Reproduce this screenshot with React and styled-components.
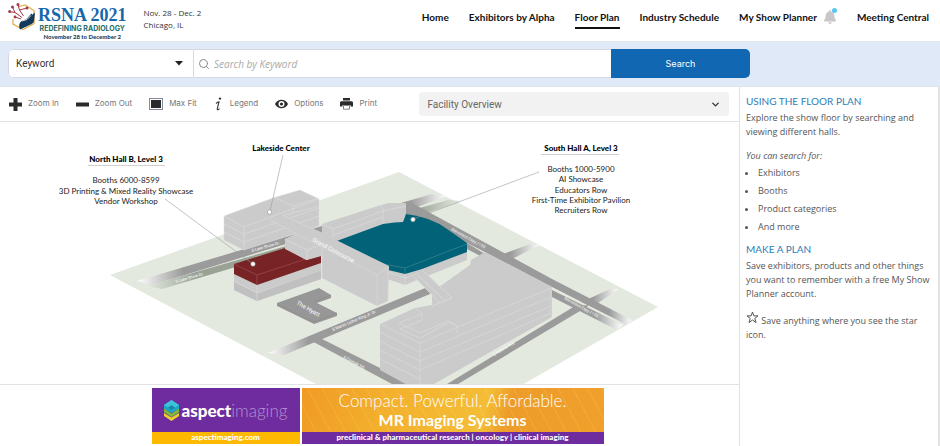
import React, { useState } from 'react'
import styled, { createGlobalStyle } from 'styled-components';
import { FaBell } from 'react-icons/fa';
import { FiChevronDown, FiSearch } from 'react-icons/fi';

const navItems = ['Home', 'Exhibitors by Alpha', 'Floor Plan', 'Industry Schedule', 'My Show Planner', 'Meeting Central'];
const searchTargets = ['Exhibitors', 'Booths', 'Product categories', 'And more'];

const PlusIcon = () => (
  <svg width="13" height="13" viewBox="0 0 13 13"><path d="M4.5 0h4v4.5H13v4H8.5V13h-4V8.500H0v-4h4.500z" fill="#2b2b2b" /></svg>
);
const MinusIcon = () => (
  <svg width="13" height="13" viewBox="0 0 13 13"><path d="M0 4.500h13v4H0z" fill="#2b2b2b" /></svg>
);
const FitIcon = () => (
  <svg width="14" height="12" viewBox="0 0 14 12">
    <rect x=".5" y=".5" width="13" height="11" fill="#fff" stroke="#8088a0" />
    <rect x="2" y="2" width="10" height="8" fill="#2b2b2b" />
  </svg>
);
const LegendIcon = () => (
  <svg width="10" height="16" viewBox="0 0 10 16">
    <circle cx="6" cy="2.600" r="1.200" fill="#333" />
    <path d="M2 7.500c1-1 2-1.700 3-1.700L3.300 12.500c-.2 1 .1 1.500.8 1.200.6-.2 1-.7 1.400-1.200" fill="none" stroke="#333" strokeWidth="1.100" />
  </svg>
);
const EyeIcon = () => (
  <svg width="13" height="10" viewBox="0 0 13 10">
    <path d="M0 5C1.500 2 4 .7 6.500.7S11.500 2 13 5c-1.500 3-4 4.300-6.500 4.300S1.500 8 0 5z" fill="#2b2b2b" />
    <circle cx="6.500" cy="5" r="3" fill="#fff" />
    <circle cx="6.500" cy="5" r="1.600" fill="#2b2b2b" />
  </svg>
);
const PrintIcon = () => (
  <svg width="13" height="12" viewBox="0 0 13 12">
    <path d="M3 0h7v2.500H3zM1 3.300h11l1 1v4.200h-2.500V7h-8v1.500H0V4.300z" fill="#2b2b2b" />
    <path d="M3.500 7.500h6v3.700h-6z" fill="#fff" stroke="#666" strokeWidth=".8" />
  </svg>
);

const tools = [
  { label: 'Zoom In', Icon: PlusIcon },
  { label: 'Zoom Out', Icon: MinusIcon },
  { label: 'Max Fit', Icon: FitIcon },
  { label: 'Legend', Icon: LegendIcon },
  { label: 'Options', Icon: EyeIcon },
  { label: 'Print', Icon: PrintIcon },
];

const LogoMark = () => (
  <svg width="29" height="29" viewBox="0 0 29 29" fill="none">
    <path d="M5 17V22l10 5.500L26 21.500V8.500L17 3 10 5" stroke="#e3b04b" strokeWidth="1.300" />
    <path d="M12 27.500c-1-2-1.500-5 .5-7.500 2-2 5-2 6.500-3.500l4-4.500c1-.8 1.500 0 1 1l3-2.500-1 9c-1 2.500-4 3-6.500 4.500z" fill="#12395b" />
    <path d="M14 19l5-1.500 4-4" stroke="#fff" strokeWidth=".8" />
    <path d="M1 9.500l6 1 7 5M7 10.500L4.500 5M10 3l1.500 5 4 6M11.500 8L19 6M7 15l6 2" stroke="#a23a4a" strokeWidth="1" />
    <g fill="#a23a4a">
      <circle cx="1.700" cy="9.500" r="1.500" /><circle cx="4.500" cy="5" r="1.500" /><circle cx="10" cy="2.500" r="1.500" />
      <circle cx="19" cy="6" r="1.500" /><circle cx="7" cy="15" r="1.400" />
    </g>
  </svg>
);

const AspectMark = () => (
  <svg width="15" height="21" viewBox="0 0 15 21">
    <path d="M7.500 0L15 5v4L7.500 13 0 9V5z" fill="#1ba6c4" />
    <path d="M7.500 5L11 7.500 7.500 10 4 7.500z" fill="#1786a8" />
    <path d="M7.500 0L15 5l-4 2.500L7.500 5 4 7.500 0 5z" fill="#3cc3d8" />
    <path d="M0 8.500l7.500 5 7.500-5v3.800l-7.500 4.700L0 12.300z" fill="#7fb83e" />
    <path d="M0 13l7.500 4.500L15 13v3l-7.500 5L0 16z" fill="#e8d22a" />
  </svg>
);

const CampusMap = () => (
  <SMap viewBox="0 122 739 262" preserveAspectRatio="xMidYMin slice" role="img" aria-label="Facility overview map">
    <defs>
      <linearGradient id="fadeWest"><stop offset="0" stopColor="#fff" /><stop offset=".25" stopColor="#9b9b9b" /></linearGradient>
      <linearGradient id="fadeGreen"><stop offset="0" stopColor="#e3e9df" /><stop offset=".35" stopColor="#9aa296" /></linearGradient>
      <linearGradient id="fadeEast"><stop offset=".2" stopColor="#9b9b9b" /><stop offset="1" stopColor="#fff" /></linearGradient>
      <linearGradient id="fadeEastGreen"><stop offset="0" stopColor="#9aa296" /><stop offset="1" stopColor="#e3e9df" /></linearGradient>
      <linearGradient id="fadeExpress"><stop offset=".9" stopColor="#9b9b9b" /><stop offset="1" stopColor="#fff" /></linearGradient>
      <linearGradient id="fadeLane"><stop offset=".6" stopColor="#9b9b9b" /><stop offset="1" stopColor="#fff" /></linearGradient>
    </defs>

    <path d="M110 275L399 172L658 307L480 409L363 409z" fill="#e3e9df" />

    {/* roads */}
    <path d="M137 281L322 226v7L152 285z" fill="url(#fadeWest)" />
    <path d="M147 286L286 246v6L162 289z" fill="url(#fadeGreen)" />
    <path d="M268 353L430 286v8L284 355z" fill="url(#fadeWest)" />
    <path d="M308 339L318 337L412 384L405 391z" fill="#9b9b9b" />
    <path d="M434 392L575 306L590 305L458 384z" fill="#9b9b9b" />
    <path d="M401 203L432 194L447 196L412 209z" fill="url(#fadeEast)" />
    <path d="M416 209L448 200L461 201L424 214z" fill="url(#fadeEastGreen)" />
    <path d="M503 254L530 244L540 245L512 259z" fill="url(#fadeEast)" />
    <path d="M586 300L610 289L619 289L592 307z" fill="url(#fadeEast)" />
    <path d="M404 205L412 203L552 279L632 320L626 325L552 287L404 210z" fill="url(#fadeExpress)" />
    <path d="M404 209L467 243L490 257L482 257L404 215z" fill="#9b9b9b" />
    <path d="M552 290L623 325L617 330L552 297z" fill="url(#fadeLane)" />
    <path d="M552 288L580 302M588 306L626 325" stroke="#e3e9df" strokeWidth="1.200" />

    {/* Lakeside Center */}
    <path d="M224 216L273 198L300 190L319 199V226L244 250L224 240z" fill="#cbcbcb" stroke="#dcdcdc" strokeWidth=".5" />
    <path d="M224 216L244 227L319 199M244 227V250M224 224L244 234L319 208M224 232L244 242L319 216M274 197L293 206V213L281 216M293 206L319 198M293 213L319 206" fill="none" stroke="#dfdfdf" strokeWidth=".6" />

    {/* North Hall */}
    <path d="M234 273L257 284L321 262V279L257 301L234 290z" fill="#cbcbcb" />
    <path d="M234 282L257 293V301L234 290zM257 293L321 269V279L257 301z" fill="#c0c0c0" />
    <path d="M234 264L285 248L306 260L321 255V263L257 285L234 274z" fill="#782426" />
    <path d="M234 264L257 275L321 254M257 275V285" fill="none" stroke="#a35558" strokeWidth=".6" />
    <path d="M257 285V301M234 281L257 293L321 270" fill="none" stroke="#dedede" strokeWidth=".6" />
    <path d="M285 239L297 233L325 240V255L307 260L285 249z" fill="#cbcbcb" />
    <path d="M285 239L307 250V260M307 250L321 245" fill="none" stroke="#e1e1e1" strokeWidth=".6" />

    {/* South Hall */}
    <path d="M322 224L381 205L389 203H406V214L403 222L383 225L334 243L322 239z" fill="#cbcbcb" />
    <path d="M322 224L333 229L383 211L406 206M333 229V242M383 211V225M333 235L383 217M381 205L384 211" fill="none" stroke="#dedede" strokeWidth=".6" />
    <path d="M384 266L405 272L467 248V260L405 285L384 278z" fill="#cbcbcb" />
    <path d="M388 272L405 278L424 271M405 274V285" fill="none" stroke="#dedede" strokeWidth=".6" />
    <path d="M334 242L383 224Q395 222 403 222L406 214Q431 217 447 229L467 243V252L422 269L405 274L388 270L373 262z" fill="#026277" />
    <path d="M373 262L405 268L467 244M405 268V274" fill="none" stroke="#3e8796" strokeWidth=".7" />

    {/* Grand Concourse */}
    <path d="M270 220L282 215L322 233L389 266L388 301L377 306L322 278V246z" fill="#cbcbcb" />
    <path d="M270 220L322 247L377 275L389 267M377 275V306M388 267V301M322 247V278M282 215L322 233" fill="none" stroke="#dadada" strokeWidth=".6" />

    {/* The Hyatt */}
    <path d="M277 303L319 288L331 295V298L317 303L337 313V316L314 324L277 306z" fill="#979797" />
    <path d="M277 304L314 322L337 313M331 295L314 302" fill="none" stroke="#898989" strokeWidth=".6" />

    {/* South building */}
    <path d="M380 324L415 308L432 305V292L470 265L471 260L485 252L552 287V317L420 392L380 370z" fill="#cbcbcb" />
    <path d="M422 313L415 308M422 313V320L400 329L420 338L450 322L457 326V333M399 323L420 333L448 321L457 326M399 323L421 314M380 324L420 343L551 288M380 332L420 352L551 297M380 341L420 361L551 306M380 350L420 370L551 313M380 359L420 379M420 343V384M551 288V317" fill="none" stroke="#dedede" strokeWidth=".6" />
    <path d="M414 277L422 269L452 298L440 303z" fill="#cbcbcb" />
    <path d="M414 277L440 303M418 275L445 301M422 270L452 298L432 306" fill="none" stroke="#e1e1e1" strokeWidth=".6" />

    {/* road names follow the direction of the road */}
    <g fill="#fff" fontFamily="Roboto, sans-serif" fontSize="4">
      <text transform="translate(252 252) rotate(-16)">S Lake Shore Dr.</text>
      <text transform="translate(176 283) rotate(-16)">S Lake Shore Dr.</text>
      <text transform="translate(333 331) rotate(-23)">S Martin Luther King Jr. Dr.</text>
      <text transform="translate(343 358) rotate(28)">S Cermak Rd.</text>
      <text transform="translate(494 356) rotate(-30)">S Indiana Ave</text>
      <text transform="translate(451 230) rotate(29)">Stevenson Expy / I-55</text>
      <text transform="translate(564 299) rotate(29)">Stevenson Expy / I-55</text>
      <text transform="translate(312 241) rotate(28)" fontSize="6">Grand Concourse</text>
      <text transform="translate(296 304) rotate(30)" fontSize="6">The Hyatt</text>
    </g>

    <g stroke="#9c9c9c" strokeWidth=".6">
      <path d="M283 155L270 211M165 199L253 264M539 172L413 219" />
      <path d="M88 165.500H165M541 154.500H619" stroke="#b0b0b0" />
    </g>
    <g fill="#fff" stroke="#999" strokeWidth=".7">
      <circle cx="269.500" cy="212" r="2.200" /><circle cx="253" cy="264" r="2.200" /><circle cx="413" cy="219.500" r="2.200" />
    </g>

    <g textAnchor="middle" fill="#222" fontFamily="Lato, sans-serif" fontSize="8">
      <g fontWeight="900" fill="#000">
        <text x="126" y="162">North Hall B, Level 3</text>
        <text x="281" y="151">Lakeside Center</text>
        <text x="581" y="151">South Hall A, Level 3</text>
      </g>
      <text x="126" y="183">Booths 6000-8599</text>
      <text x="126" y="194">3D Printing &amp; Mixed Reality Showcase</text>
      <text x="126" y="204">Vendor Workshop</text>
      <text x="581" y="172">Booths 1000-5900</text>
      <text x="581" y="182">AI Showcase</text>
      <text x="581" y="193">Educators Row</text>
      <text x="581" y="203">First-Time Exhibitor Pavilion</text>
      <text x="581" y="213">Recruiters Row</text>
    </g>
  </SMap>
);

export default function App() {
  const [keyword, setKeyword] = useState('');

  return (
    <>
      <GlobalStyle />
      <SHeader>
        <SLogo href="#">
          <LogoMark />
          <SLogoText>
            <SLogoName>RSNA 2021</SLogoName>
            <SLogoTheme>REDEFINING RADIOLOGY</SLogoTheme>
            <SLogoDate>November 28 to December 2</SLogoDate>
          </SLogoText>
        </SLogo>
        <SEventInfo>Nov. 28 - Dec. 2<br />Chicago, IL</SEventInfo>
        <SNav>
          {navItems.map((item) => (
            <SNavItem key={item}>
              <SNavLink href="#" $active={item === 'Floor Plan'}>{item}</SNavLink>
              {item === 'My Show Planner' && <SBell><FaBell size={14} /></SBell>}
            </SNavItem>
          ))}
        </SNav>
      </SHeader>

      <SSearchBand>
        <SSearchForm onSubmit={(e) => e.preventDefault()}>
          <SSelectArea>
            <STypeSelect aria-label="Search type"><option>Keyword</option></STypeSelect>
            <svg width="8" height="5" viewBox="0 0 8 5"><path d="M0 0h8L4 4.500z" fill="#222" /></svg>
          </SSelectArea>
          <SInputArea>
            <FiSearch size={12} />
            <input type="text" aria-label="Search by Keyword" placeholder="Search by Keyword" value={keyword} onChange={(e) => setKeyword(e.target.value)} />
          </SInputArea>
          <SSearchButton type="submit">Search</SSearchButton>
        </SSearchForm>
      </SSearchBand>

      <SBody>
        <SMain>
          <SToolbar>
            <STools>
              {tools.map(({ label, Icon }) => (
                <STool key={label} type="button"><Icon /><span>{label}</span></STool>
              ))}
            </STools>
            <SFacility>
              <SFacilitySelect aria-label="Facility"><option>Facility Overview</option></SFacilitySelect>
              <FiChevronDown size={11} strokeWidth={3} />
            </SFacility>
          </SToolbar>
          <CampusMap />
          <SAdArea>
            <SAd href="#">
              <SAdPanel>
                <SAdBrand><AspectMark /><span><b>aspect</b>imaging</span></SAdBrand>
                <SAdStrip $color="#fdb902">aspectimaging.com</SAdStrip>
              </SAdPanel>
              <SAdPanel>
                <SAdMessage>
                  <SAdLead>Compact. Powerful. Affordable.</SAdLead>
                  <SAdTitle>MR Imaging Systems</SAdTitle>
                </SAdMessage>
                <SAdStrip $color="#6f2c9e">preclinical &amp; pharmaceutical research | oncology | clinical imaging</SAdStrip>
              </SAdPanel>
            </SAd>
          </SAdArea>
        </SMain>
        <SSide>
          <SSideTitle>USING THE FLOOR PLAN</SSideTitle>
          <SText>Explore the show floor by searching and viewing different halls.</SText>
          <SNote>You can search for:</SNote>
          <SList>
            {searchTargets.map((target) => <li key={target}>{target}</li>)}
          </SList>
          <SSideTitle>MAKE A PLAN</SSideTitle>
          <SText>Save exhibitors, products and other things you want to remember with a free My Show Planner account.</SText>
          <SText>
            <svg width="13" height="13" viewBox="0 0 13 13"><path d="M6.500 1l1.400 3.900H12L8.800 7.400 10 11.500 6.500 9 3 11.500l1.200-4.100L1 4.900h4.100z" fill="none" stroke="#555" /></svg>
            {' '}Save anything where you see the star icon.
          </SText>
        </SSide>
      </SBody>
    </>
  )
}

const GlobalStyle = createGlobalStyle`
  * {
    box-sizing: border-box;
  }
  body {
    margin: 0;
    background: #fff;
    color: #555;
    font-family: Lato, sans-serif;
    overflow: hidden;
  }
  button, input, select {
    margin: 0;
    border: 0;
    padding: 0;
    background: none;
    font-family: inherit;
    outline: none;
  }
  a {
    color: inherit;
    text-decoration: none;
  }
`

const SHeader = styled.header`
  display: flex;
  align-items: flex-start;
  height: 42px;
  padding: 0 11px 0 8px;
  border-bottom: 1px solid #e3e6ec;
`
const SLogo = styled.a`
  display: flex;
  gap: 1px;
  padding-top: 2px;
`
const SLogoText = styled.span`
  display: flex;
  flex-direction: column;
  align-items: center;
  padding-top: 3px;
  font-weight: 700;
  white-space: nowrap;
`
const SLogoName = styled.span`
  color: #1668ad;
  font: 700 18px/20px "Liberation Serif", serif;
`
const SLogoTheme = styled.span`
  color: #1d6d6b;
  font-family: Inter, sans-serif;
  font-size: 7px;
  line-height: 8px;
`
const SLogoDate = styled.span`
  color: #24425f;
  font-size: 6px;
  font-weight: 900;
  line-height: 7px;
`
const SEventInfo = styled.p`
  margin: 0 0 0 17px;
  padding-top: 7px;
  color: #333;
  font-family: "Open Sans", sans-serif;
  font-size: 8px;
  line-height: 12px;
  white-space: nowrap;
`
const SNav = styled.nav`
  display: flex;
  gap: 20px;
  margin-left: auto;
  padding-top: 8px;
`
const SNavItem = styled.div`
  display: flex;
  gap: 6px;
`
const SNavLink = styled.a`
  height: 21px;
  border-bottom: 2px solid ${({ $active }) => ($active ? '#111' : 'transparent')};
  color: #111;
  font-size: 10px;
  font-weight: 700;
  line-height: 18px;
  white-space: nowrap;
`
const SBell = styled.span`
  position: relative;
  height: 14px;
  color: #c8c8c8;

  &::after {
    content: '';
    position: absolute;
    top: 0;
    right: 0;
    width: 5px;
    height: 5px;
    border-radius: 50%;
    background: #5bc4ee;
  }
`

const SSearchBand = styled.div`
  padding: 7px 190px 8px 8px;
  border-bottom: 1px solid #dfe3ea;
  background: #e0e9f7;
`
const SSearchForm = styled.form`
  display: grid;
  grid-template-columns: 186px 1fr 139px;
  height: 29px;
  overflow: hidden;
  border-radius: 5px;
  background: #fff;
`
const SSelectArea = styled.div`
  display: flex;
  align-items: center;
  padding: 0 10px 0 7px;
  border: 1px solid #d5dae2;
  border-radius: 5px 0 0 5px;
`
const STypeSelect = styled.select`
  flex: 1;
  appearance: none;
  color: #333;
  font-family: Roboto, sans-serif;
  font-size: 10px;
`
const SInputArea = styled.div`
  display: flex;
  align-items: center;
  gap: 4px;
  padding-left: 4px;
  border: solid #d5dae2;
  border-width: 1px 0;
  color: #888;

  & > input {
    flex: 1;
    min-width: 0;
    font-family: "Open Sans", sans-serif;
    font-size: 10px;
    font-style: italic;
  }
  & > input::placeholder {
    color: #aaa;
  }
`
const SSearchButton = styled.button`
  background: #1167b1;
  color: #fff;
  font-family: Inter, sans-serif;
  font-size: 9px;
`

const SBody = styled.div`
  display: flex;
  min-height: calc(100vh - 87px);
`
const SMain = styled.main`
  flex: 1;
  min-width: 0;
`
const SToolbar = styled.div`
  display: flex;
  align-items: center;
  justify-content: space-between;
  padding: 5px 10px 5px 9px;
  border-bottom: 1px solid #e2e2e2;
`
const STools = styled.div`
  display: flex;
  gap: 17px;
`
const STool = styled.button`
  display: flex;
  align-items: center;
  gap: 6px;
  height: 24px;
  color: #777;
  font-family: Inter, sans-serif;
  font-size: 8px;
  white-space: nowrap;

  & > span {
    padding-bottom: 2px;
  }
`
const SFacility = styled.div`
  display: flex;
  align-items: center;
  width: 43%;
  height: 24px;
  padding: 0 8px;
  border-radius: 4px;
  background: #f2f2f2;
  color: #333;
`
const SFacilitySelect = styled.select`
  flex: 1;
  appearance: none;
  color: #666;
  font-family: Roboto, sans-serif;
  font-size: 10px;
`
const SMap = styled.svg`
  display: block;
  width: 100%;
`

const SAdArea = styled.div`
  display: flex;
  justify-content: center;
  padding: 3px 0 0 16px;
  border-top: 1px solid #e2e2e2;
`
const SAd = styled.a`
  display: grid;
  grid-template-columns: 148px 302px;
  gap: 2px;
  color: #fff;
  white-space: nowrap;
`
const SAdPanel = styled.span`
  display: flex;
  flex-direction: column;
`
const SAdBrand = styled.span`
  display: flex;
  align-items: center;
  justify-content: center;
  gap: 3px;
  height: 44px;
  background: #6f2c9e;
  color: #b48fd0;
  font-size: 17px;
  font-weight: 300;

  & b {
    color: #fff;
    font-weight: 900;
  }
`
const SAdStrip = styled.span`
  height: 12px;
  background: ${({ $color }) => $color};
  font-size: 8px;
  font-weight: 900;
  line-height: 11px;
  text-align: center;
`
const SAdMessage = styled.span`
  display: flex;
  flex-direction: column;
  align-items: center;
  height: 44px;
  padding-top: 3px;
  background:
    repeating-linear-gradient(62deg, transparent 0 12px, rgba(255, 220, 120, 0.18) 12px 13px),
    linear-gradient(105deg, #f09a25 0%, #f3b02d 28%, #f4bd36 60%, #ed9c2a 68%, #f0a02b 100%);
`
const SAdLead = styled.span`
  font-size: 17px;
  font-weight: 300;
  line-height: 20px;
`
const SAdTitle = styled.span`
  font-size: 16px;
  font-weight: 700;
  line-height: 18px;
`

const SSide = styled.aside`
  width: 201px;
  padding: 6px 5px 0 6px;
  border: solid #e2e2e2;
  border-width: 0 2px 0 1px;
  font-family: "Open Sans", sans-serif;
  font-size: 9px;
  line-height: 14px;
`
const SSideTitle = styled.h2`
  margin: 0;
  color: #2e7db5;
  font-family: Lato, sans-serif;
  font-size: 10px;
  font-weight: 400;
  line-height: 16px;
`
const SText = styled.p`
  margin: 2px 0 10px;
`
const SNote = styled.p`
  margin: 0;
  font-style: italic;
`
const SList = styled.ul`
  margin: 1px 0 5px;
  padding-left: 12px;

  & > li {
    margin: 0;
    line-height: 18px;
  }
`
